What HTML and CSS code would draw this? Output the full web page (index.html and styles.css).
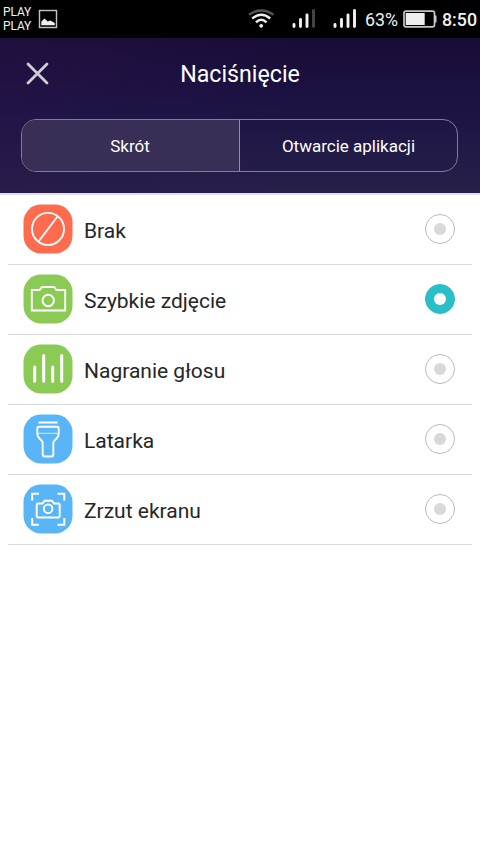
FILE: index.html
```html
<!DOCTYPE html>
<html lang="pl">
<head>
<meta charset="utf-8">
<title>Naciśnięcie</title>
<link rel="stylesheet" href="styles.css">
</head>
<body>
<div class="status">
  <div class="carrier"><span>PLAY</span><span>PLAY</span></div>
  <svg class="picture" width="20" height="20" viewBox="0 0 20 20"><rect x="1.500" y="1.500" width="17" height="17" fill="none" stroke="#c4c4c4" stroke-width="1.400"/><path d="M3.300 16.300v-3.500l3-3.300 3.500 3 2.500-1 4.500 2.500v2.300z" fill="#f0f0f0"/></svg>
  <svg class="signals" width="112" height="24" viewBox="0 0 112 24" fill="none">
    <g stroke-width="2.400"><path d="M2 7.700q12-8.500 24.500 0" stroke="#555"/><path d="M5.200 11.500q9-7.500 18 0M9 15.300q5.200-5 10.500 0" stroke="#eee"/></g><circle cx="14.200" cy="18.800" r="1.900" fill="#eee"/>
    <path d="M47 17.500v2M53.500 12.500v7M60 8v11.500M88 17.500v2M94.500 12.500v7M101 8v11.500M107.500 3.500v16" stroke="#f2f2f2" stroke-width="2.900" stroke-linecap="round"/><path d="M66.500 3.500v16" stroke="#454545" stroke-width="2.900" stroke-linecap="round"/>
  </svg>
  <span class="percent">63%</span>
  <svg class="battery" width="34" height="18" viewBox="0 0 34 18"><rect x="1" y="1.200" width="30.500" height="15.600" rx="2" fill="none" stroke="#c5c5c5" stroke-width="1.700"/><rect x="2.700" y="3" width="19" height="12" fill="#eee"/><path d="M32.500 5.500v7" stroke="#ccc" stroke-width="2"/></svg>
  <span class="clock">8:50</span>
</div>
<header class="header">
  <div class="titlebar">
    <svg class="close" width="24" height="24" viewBox="0 0 24 24"><path d="M2 2l19 19M21 2l-19 19" stroke="#d0cdd5" stroke-width="2.800" stroke-linecap="round"/></svg>
    <h1>Naciśnięcie</h1>
  </div>
  <div class="tabs"><div class="tab active">Skrót</div><div class="tab">Otwarcie aplikacji</div></div>
</header>
<main class="list">
  <div class="row">
    <svg class="icon red" viewBox="0 0 50 50"><rect class="tile" x=".5" y=".5" width="49" height="49" rx="17.500"/><circle cx="25" cy="24.900" r="16"/><path d="M15.500 37.500L34.500 12.500"/></svg>
    <span class="label">Brak</span><span class="radio"></span>
  </div>
  <div class="row">
    <svg class="icon green" viewBox="0 0 50 50"><rect class="tile" x=".5" y=".5" width="49" height="49" rx="17.500"/><path d="M8.800 16h7.700l2.500-3h12l2.500 3h8.700v20.500H8.800z"/><circle cx="25.200" cy="26.500" r="5.700"/></svg>
    <span class="label">Szybkie zdjęcie</span><span class="radio selected"></span>
  </div>
  <div class="row">
    <svg class="icon green" viewBox="0 0 50 50"><rect class="tile" x=".5" y=".5" width="49" height="49" rx="17.500"/><path class="bars" d="M11.700 23v14.300M20.700 11.500v25.800M29.700 23v14.300M38.700 11.500v25.800"/></svg>
    <span class="label">Nagranie głosu</span><span class="radio"></span>
  </div>
  <div class="row">
    <svg class="icon blue" viewBox="0 0 50 50"><rect class="tile" x=".5" y=".5" width="49" height="49" rx="17.500"/><path d="M15.500 8.500h19M16 12.800h18q1.700 0 1.700 1.700v5.500q-.2 2.500-2.200 4.500l-2 2q-1.200 1.300-1.200 3v11q0 2-2 2h-6.600q-2 0-2-2v-11q0-1.700-1.200-3l-2-2q-2-2-2.200-4.500v-5.500q0-1.700 1.700-1.700z"/><path class="thin" d="M14.500 19.300h21"/></svg>
    <span class="label">Latarka</span><span class="radio"></span>
  </div>
  <div class="row">
    <svg class="icon blue" viewBox="0 0 50 50"><rect class="tile" x=".5" y=".5" width="49" height="49" rx="17.500"/><path class="corners" d="M9.200 16.500V9.700H16M34.500 9.700h6.800v6.800M41.300 34v6.800h-6.800M16 40.800H9.200V34"/><path d="M15 19.500h4.500l2-2.700h7.500l2 2.700h4q1.700 0 1.700 1.500v11q0 1.500-1.700 1.500H15.300q-1.600 0-1.600-1.500V21q0-1.500 1.600-1.500z"/><circle cx="25.100" cy="24.800" r="4.300"/></svg>
    <span class="label">Zrzut ekranu</span><span class="radio"></span>
  </div>
</main>
</body>
</html>
```
FILE: styles.css
```css
* { box-sizing: border-box; }
body { margin: 0; min-height: 854px; background: #fff; font-family: Roboto, "Noto Sans", sans-serif; }
svg { display: block; flex: none; }
.status { display: flex; align-items: center; height: 38px; padding-left: 3px; background: #000; color: #f2f2f2; white-space: nowrap; }
.carrier { display: flex; flex-direction: column; width: 35px; font-size: 12px; line-height: 14px; letter-spacing: -0.1px; }
.signals { margin-left: 189px; }
.percent { width: 34px; margin-left: 6px; padding-top: 2px; font-size: 17.8px; line-height: 20px; }
.battery { margin-left: 4px; }
.clock { margin-left: 5px; padding-top: 2px; font-size: 17.8px; font-weight: 500; line-height: 20px; }
.header { height: 157px; border-bottom: 2px solid #e0e0e3; background: linear-gradient(90deg, rgba(45, 20, 75, 0.35), rgba(45, 20, 75, 0) 60%), linear-gradient(#190c36, #1c1344 45%, #272049); color: #fff; }
.titlebar { display: grid; grid-template-columns: 50px 1fr 50px; align-items: center; height: 81px; padding-bottom: 9px; }
.close { justify-self: end; }
h1 { margin: 0; font-size: 23.2px; font-weight: 400; line-height: 30px; text-align: center; }
.tabs { display: grid; grid-template-columns: 218px 217px; width: 437px; height: 53px; margin-left: 21px; border: 1px solid #817d98; border-radius: 15px; overflow: hidden; }
.tab { display: flex; align-items: center; justify-content: center; font-size: 17px; }
.active { background: #392e55; border-right: 1px solid #918da3; padding-right: 1px; }
.list { padding: 0 8px; }
.row { display: flex; align-items: center; height: 70px; padding: 0 17px 1px 15px; border-bottom: 1px solid #d9d9d9; }
.icon { width: 50px; height: 50px; fill: none; stroke: #fff; stroke-width: 1.9; }
.tile { stroke: none; }
.red .tile { fill: #ff6b4e; }
.green .tile { fill: #8bca55; }
.blue .tile { fill: #5ab5f7; }
.bars { stroke-width: 3; stroke-linecap: round; }
.thin { stroke-width: 1; opacity: 0.75; }
.corners { stroke-width: 2; }
.label { flex: 1; margin-left: 11px; padding-top: 3px; color: #262626; font-size: 21px; line-height: 26px; }
.radio { display: grid; place-items: center; width: 30px; height: 30px; border: 1px solid #b9b9b9; border-radius: 50%; }
.radio::before { content: ""; width: 12px; height: 12px; border-radius: 50%; background: #d8d8d8; }
.selected { border-color: #28bfc7; background: #28bfc7; }
.selected::before { background: #fff; }
```
